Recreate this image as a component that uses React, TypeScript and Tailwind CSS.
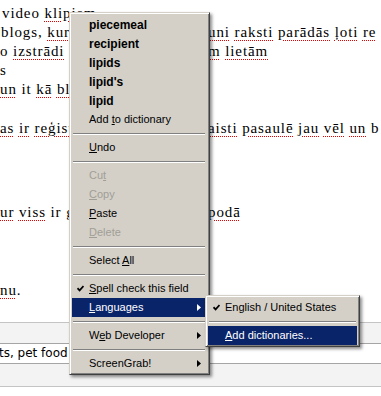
import React from "react";

const serif = { fontFamily: '"Liberation Serif", "Times New Roman", serif' };

function W({ children }: { children: React.ReactNode }) {
  return (
    <span className="underline decoration-dotted decoration-[#e00000] decoration-1 underline-offset-[3px]">
      {children}
    </span>
  );
}

function Line({ left, right }: { left: React.ReactNode; right?: React.ReactNode }) {
  return (
    <div className="flex h-[19px] leading-[19px] whitespace-nowrap">
      <div className="w-[208px] shrink-0 overflow-hidden">{left}</div>
      <div>{right}</div>
    </div>
  );
}

function Check({ white }: { white?: boolean }) {
  return (
    <svg width="7" height="7" viewBox="0 0 7 7">
      <path d="M0.5 3.2 L2.6 5.4 L6.5 1" fill="none" stroke={white ? "#fff" : "#000"} strokeWidth="1.7" />
    </svg>
  );
}

function Arrow({ white }: { white?: boolean }) {
  return (
    <svg width="4" height="7" viewBox="0 0 4 7">
      <polygon points="0,0 4,3.5 0,7" fill={white ? "#fff" : "#000"} />
    </svg>
  );
}

function Item({
  children,
  bold,
  disabled,
  check,
  arrow,
  active,
}: {
  children: React.ReactNode;
  bold?: boolean;
  disabled?: boolean;
  check?: boolean;
  arrow?: boolean;
  active?: boolean;
}) {
  return (
    <div
      className={
        "flex h-[19px] items-center whitespace-nowrap " +
        (active ? "bg-[#0a246a] text-white " : "") +
        (disabled ? "text-[#a19e96] " : "") +
        (bold ? "font-bold text-[12px] " : "text-[11px] ")
      }
    >
      <div className="w-[17px] shrink-0 pl-[5px] flex items-center">{check && <Check white={active} />}</div>
      <span>{children}</span>
      <div className="flex-1" />
      {arrow && (
        <div className="mr-[5px] flex items-center">
          <Arrow white={active} />
        </div>
      )}
    </div>
  );
}

function Sep() {
  return (
    <div className="h-[9px] flex flex-col justify-center px-[1px]">
      <div className="h-px bg-[#808080]" />
      <div className="h-px bg-white" />
    </div>
  );
}

const menuBox =
  "absolute bg-[#d4d0c8] border border-t-[#d4d0c8] border-l-[#d4d0c8] border-r-[#404040] border-b-[#404040] shadow-[inset_1px_1px_0_#fff,inset_-1px_-1px_0_#808080,2px_2px_3px_rgba(0,0,0,0.45)]";

export default function App() {
  return (
    <div className="relative w-[381px] h-[396px] overflow-hidden bg-white text-black">
      <div style={serif} className="text-[15px] tracking-[0.9px] pt-[4px]">
        <Line left={<span className="pl-[2px]">video <W>klipiem</W></span>} />
        <Line
          left={<span className="pl-[1px]">blogs, <W>kurš</W></span>}
          right={
            <span>
              <W>uni</W> <W>raksti</W> <W>parādās</W> <W>ļoti</W> <W>re</W>
            </span>
          }
        />
        <Line
          left={<span>o <W>izstrādi</W></span>}
          right={
            <span>
              <W>m</W> <W>lietām</W>
            </span>
          }
        />
        <Line left={<span>s</span>} />
        <Line left={<span><W>un</W> it <W>kā</W> <W>bl</W></span>} />
        <div className="mt-[20px]">
          <Line
            left={<span><W>as</W> <W>ir</W> <W>reģist</W></span>}
            right={
              <span>
                <W>aisti</W> <W>pasaulē</W> <W>jau</W> <W>vēl</W> <W>un</W> b
              </span>
            }
          />
        </div>
        <div className="mt-[65px]">
          <Line left={<span><W>ur</W> <W>viss</W> ir g</span>} right={<W>podā</W>} />
        </div>
        <div className="mt-[59px]">
          <Line left={<span><W>nu</W>.</span>} />
        </div>
      </div>

      <div className="mt-[22px] border-t border-b border-[#c4c4c4] bg-[#f3f3f3] pt-[20px] pb-[22px]">
        <div
          className="-ml-[2px] w-[420px] h-[21px] border border-[#a5a5a5] bg-white text-[12px] leading-[19px] whitespace-nowrap"
          style={{ fontFamily: '"DejaVu Sans", sans-serif' }}
        >
          ts, pet food
        </div>
      </div>

      <div
        className={menuBox + " left-[69px] top-[12px] w-[141px] pl-[2px] pr-[3px] pt-[2px] pb-[1px]"}
        style={{ fontFamily: '"Liberation Sans", Arial, sans-serif' }}
      >
        <Item bold>piecemeal</Item>
        <Item bold>recipient</Item>
        <Item bold>lipids</Item>
        <Item bold>lipid's</Item>
        <Item bold>lipid</Item>
        <Item>
          Add <u>t</u>o dictionary
        </Item>
        <Sep />
        <Item>
          <u>U</u>ndo
        </Item>
        <Sep />
        <Item disabled>
          Cu<u>t</u>
        </Item>
        <Item disabled>
          <u>C</u>opy
        </Item>
        <Item>
          <u>P</u>aste
        </Item>
        <Item disabled>
          <u>D</u>elete
        </Item>
        <Sep />
        <Item>
          Select <u>A</u>ll
        </Item>
        <Sep />
        <Item check>
          <u>S</u>pell check this field
        </Item>
        <Item active arrow>
          <u>L</u>anguages
        </Item>
        <Sep />
        <Item arrow>
          W<u>e</u>b Developer
        </Item>
        <Sep />
        <Item arrow>ScreenGrab!</Item>
      </div>

      <div
        className={menuBox + " left-[205px] top-[295px] w-[155px] pl-[2px] pr-[2px] pt-[2px] pb-[1px]"}
        style={{ fontFamily: '"Liberation Sans", Arial, sans-serif' }}
      >
        <Item check>English / United States</Item>
        <Sep />
        <Item active>
          <u>A</u>dd dictionaries...
        </Item>
      </div>
    </div>
  );
}
